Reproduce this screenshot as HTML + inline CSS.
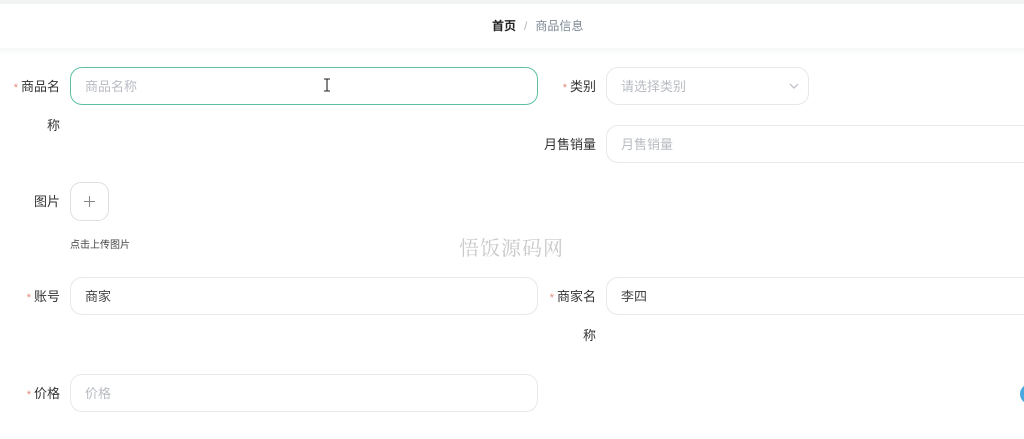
<!DOCTYPE html>
<html><head><meta charset="utf-8"><style>
*{margin:0;padding:0;box-sizing:border-box}
body{width:1024px;height:439px;overflow:hidden;background:#fff;font-family:"Liberation Sans","Noto Sans CJK SC",sans-serif;position:relative;color:#333}
.bar{position:absolute;left:0;top:0;width:1024px;height:4px;background:#f1f4f3}
.band{position:absolute;left:0;top:48px;width:1024px;height:8px;background:linear-gradient(#f6f8f7,#fff)}
.bc{position:absolute;top:18px;left:492px;font-size:12px;line-height:16px}
.bc b{color:#222}
.bc .s{color:#b0b5bb;margin:0 8px}
.bc .c{color:#7f8a96}
.in{position:absolute;height:38px;border:1px solid #e6e8eb;border-radius:12px;font-size:13px;line-height:38px;padding-left:14px;color:#444}
.ph{color:#b8bcc2}
.lb{position:absolute;font-size:13px;line-height:16px;color:#333;text-align:right}
.lb i{font-style:normal;color:#e08a7a;font-size:11px;margin-right:3px}
.wm{position:absolute;left:459px;top:232px;font-family:"Noto Serif CJK SC","Liberation Serif",serif;font-size:20px;color:#c9c9c9;letter-spacing:1px}
</style></head><body>
<div class="bar"></div><div class="band"></div>
<div class="bc"><b>首页</b><span class="s">/</span><span class="c">商品信息</span></div>

<div class="lb" style="right:964px;top:79px;white-space:nowrap"><i>*</i>商品名</div>
<div class="lb" style="right:964px;top:118px">称</div>
<div class="in" style="left:70px;top:67px;width:468px;border:1.5px solid #5fbfa5"><span class="ph">商品名称</span></div>
<svg style="position:absolute;left:323px;top:78px" width="8" height="14" viewBox="0 0 8 14"><path d="M1 1h2.5l0.5 0.5 0.5-0.5H7M4 1.5v11M1 13h2.5l0.5-0.5 0.5 0.5H7" fill="none" stroke="#222" stroke-width="1.1"/></svg>

<div class="lb" style="right:428px;top:79px;white-space:nowrap"><i>*</i>类别</div>
<div class="in" style="left:606px;top:67px;width:203px"><span class="ph">请选择类别</span>
<svg style="position:absolute;right:9px;top:15px" width="10" height="6" viewBox="0 0 10 6"><path d="M1 1l4 4 4-4" fill="none" stroke="#b8bcc2" stroke-width="1.2"/></svg></div>

<div class="lb" style="right:428px;top:137px;white-space:nowrap">月售销量</div>
<div class="in" style="left:606px;top:125px;width:430px"><span class="ph">月售销量</span></div>

<div class="lb" style="right:964px;top:194px">图片</div>
<div style="position:absolute;left:70px;top:182px;width:39px;height:39px;border:1px solid #dcdfe3;border-radius:11px">
<svg style="position:absolute;left:12px;top:12px" width="13" height="13" viewBox="0 0 13 13"><path d="M6.5 1v11M1 6.5h11" stroke="#888" stroke-width="1.1"/></svg></div>
<div style="position:absolute;left:70px;top:236px;font-size:10px;color:#444">点击上传图片</div>

<div class="wm">悟饭源码网</div>

<div class="lb" style="right:964px;top:289px;white-space:nowrap"><i>*</i>账号</div>
<div class="in" style="left:70px;top:277px;width:468px">商家</div>
<div class="lb" style="right:428px;top:289px;white-space:nowrap"><i>*</i>商家名</div>
<div class="lb" style="right:428px;top:328px">称</div>
<div class="in" style="left:606px;top:277px;width:430px">李四</div>

<div class="lb" style="right:964px;top:386px;white-space:nowrap"><i>*</i>价格</div>
<div class="in" style="left:70px;top:374px;width:468px"><span class="ph">价格</span></div>

<div style="position:absolute;left:1020px;top:384px;width:20px;height:20px;border-radius:50%;background:#4aa8e0"></div>
</body></html>
